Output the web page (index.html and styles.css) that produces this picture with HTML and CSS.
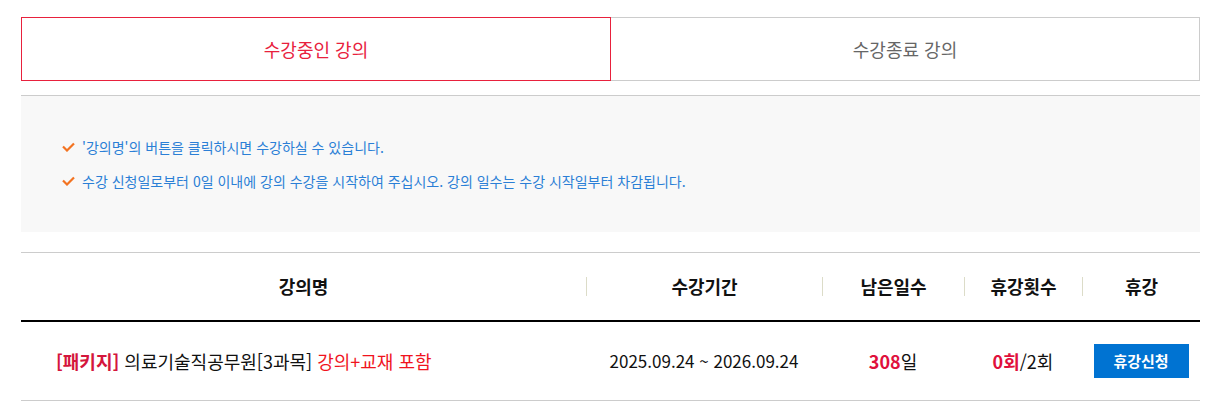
FILE: index.html
```html
<!DOCTYPE html>
<html lang="ko">
<head>
<meta charset="utf-8">
<title>수강중인 강의</title>
<link rel="stylesheet" href="styles.css">
</head>
<body>
<div class="wrap">
  <div class="tabs">
    <div class="tab active">수강중인 강의</div>
    <div class="tab">수강종료 강의</div>
  </div>
  <div class="info">
    <ul>
      <li><svg class="chk" viewBox="0 0 13 10" width="13" height="10"><path d="M1 4.5 L5 8.5 L12 1.5" fill="none" stroke="#f37321" stroke-width="2.2"/></svg><span>'강의명'의 버튼을 클릭하시면 수강하실 수 있습니다.</span></li>
      <li><svg class="chk" viewBox="0 0 13 10" width="13" height="10"><path d="M1 4.5 L5 8.5 L12 1.5" fill="none" stroke="#f37321" stroke-width="2.2"/></svg><span>수강 신청일로부터 0일 이내에 강의 수강을 시작하여 주십시오. 강의 일수는 수강 시작일부터 차감됩니다.</span></li>
    </ul>
  </div>
  <table class="list">
    <thead>
      <tr>
        <th class="c1"><span class="th">강의명</span></th>
        <th class="c2"><span class="th sep">수강기간</span></th>
        <th class="c3"><span class="th sep">남은일수</span></th>
        <th class="c4"><span class="th sep">휴강횟수</span></th>
        <th class="c5"><span class="th sep">휴강</span></th>
      </tr>
    </thead>
    <tbody>
      <tr>
        <td class="title"><b class="pkg">[패키지]</b> 의료기술직공무원[3과목] <span class="red">강의+교재 포함</span></td>
        <td class="date">2025.09.24 ~ 2026.09.24</td>
        <td><b class="num">308</b>일</td>
        <td><b class="num">0회</b>/2회</td>
        <td><button class="btn">휴강신청</button></td>
      </tr>
    </tbody>
  </table>
</div>
</body>
</html>
```
FILE: styles.css
```css
* { box-sizing: border-box; }
body {
  margin: 0;
  background: #fff;
  font-family: "Noto Sans CJK KR", "Noto Sans", sans-serif;
  color: #222;
}
.wrap {
  width: 1179px;
  margin-left: 21px;
  padding-top: 17px;
}
.tabs {
  display: flex;
  height: 64px;
}
.tab {
  flex: 1;
  display: flex;
  align-items: center;
  justify-content: center;
  font-size: 18px;
  color: #666;
  border: 1px solid #ccc;
  border-left: none;
}
.tab.active {
  flex: 0 0 590px;
  color: #e8213d;
  border: 1px solid #e8213d;
}
.info {
  margin-top: 14px;
  border-top: 1px solid #ccc;
  background: #f8f8f8;
  height: 137px;
  padding: 41px 0 0 40px;
}
.info ul {
  list-style: none;
  margin: 0;
  padding: 0;
}
.info li {
  display: flex;
  align-items: center;
  height: 20px;
  margin-bottom: 14px;
  font-size: 14px;
  color: #2b7fd6;
}
.chk {
  margin: 0 7px 0 1px;
  flex: none;
}
.list {
  margin-top: 20px;
  width: 100%;
  border-collapse: collapse;
  border-top: 1px solid #ccc;
}
.list th {
  height: 68px;
  padding: 0;
  font-size: 18px;
  font-weight: bold;
  color: #111;
  border-bottom: 2px solid #000;
}
.th {
  display: flex;
  align-items: center;
  justify-content: center;
  height: 19px;
}
.th.sep { border-left: 1px solid #dcdcc8; }
.c1 { width: 565px; }
.c2 { width: 236px; }
.c3 { width: 142px; }
.c4 { width: 118px; }
.c5 { width: 118px; }
.list td {
  height: 80px;
  padding: 0;
  text-align: center;
  font-size: 18px;
  color: #111;
  border-bottom: 1px solid #ccc;
}
.list td.date { font-size: 17px; }
.list td.title {
  text-align: left;
  padding-left: 35px;
}
.pkg { color: #d4163c; }
.red { color: #f0141e; }
.num { color: #e0103c; }
.btn {
  width: 95px;
  height: 34px;
  border: none;
  background: #0073d2;
  color: #fff;
  font-family: inherit;
  font-size: 15px;
  font-weight: bold;
  padding: 0;
  cursor: pointer;
}
```
